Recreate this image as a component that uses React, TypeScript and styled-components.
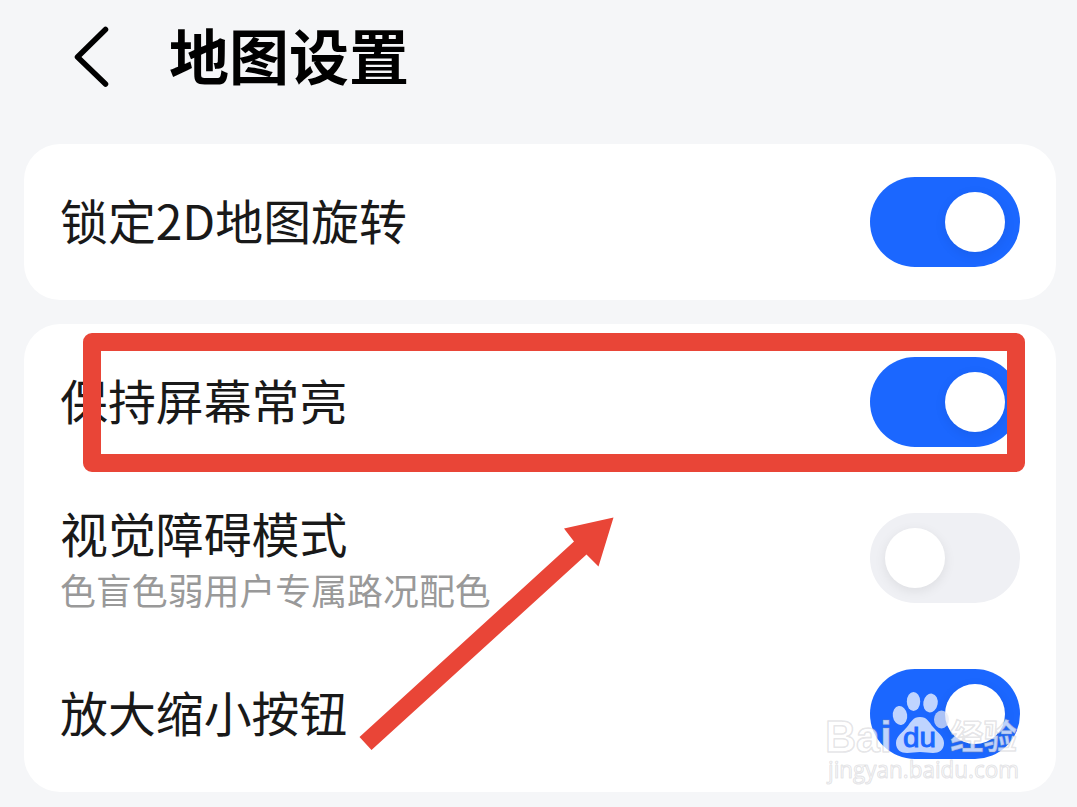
import React from "react";
import styled, { createGlobalStyle } from "styled-components";

const GlobalStyle = createGlobalStyle`
  * { box-sizing: border-box; }
  html, body { margin: 0; padding: 0; background: #f5f6f8; }
  body { font-family: "Noto Sans CJK SC", "Noto Sans", sans-serif; overflow: hidden; }
`;

const Screen = styled.div`
  position: relative;
  width: 1077px;
  height: 807px;
  background: #f5f6f8;
  overflow: hidden;
`;

const Header = styled.header`
  display: flex;
  align-items: center;
  height: 144px;
  padding: 0 0 30px 72px;
`;

const BackButton = styled.button`
  display: flex;
  width: 38px;
  height: 62px;
  padding: 0;
  border: 0;
  background: none;
`;

const Title = styled.h1`
  margin: 0 0 7px 59px;
  font-size: 60px;
  line-height: 60px;
  font-weight: 700;
  color: #000;
`;

const Groups = styled.main`
  display: flex;
  flex-direction: column;
  gap: 24px;
  padding: 0 21px 0 24px;
`;

const Card = styled.section`
  border-radius: 36px;
  background: #fff;
`;

const Row = styled.div`
  display: flex;
  align-items: center;
  justify-content: space-between;
  height: 156px;
  padding: 0 36px;
`;

const Texts = styled.div<{ $stacked: boolean }>`
  display: flex;
  flex-direction: column;
  gap: 15px;
  padding-bottom: ${(p) => (p.$stacked ? 2 : 6)}px;
`;

const Label = styled.span`
  font-size: 47.9px;
  line-height: 48px;
  color: #191919;
`;

const Hint = styled.span`
  font-size: 35.9px;
  line-height: 36px;
  color: #999;
`;

const Track = styled.button<{ $on: boolean }>`
  display: flex;
  align-items: center;
  justify-content: ${(p) => (p.$on ? "flex-end" : "flex-start")};
  width: 150px;
  height: 90px;
  padding: 0 15px;
  border: 0;
  border-radius: 45px;
  background: ${(p) => (p.$on ? "#1b67ff" : "#eff0f4")};
`;

const Knob = styled.span`
  width: 60px;
  height: 60px;
  border-radius: 50%;
  background: #fff;
  box-shadow: 0 3px 12px rgba(0, 0, 0, 0.08);
`;

const Highlight = styled.div`
  position: absolute;
  left: 83px;
  top: 333px;
  width: 942px;
  height: 139px;
  border: 18px solid #e94537;
  border-radius: 9px;
`;

const Arrow = styled.svg`
  position: absolute;
  left: 350px;
  top: 510px;
`;

const Watermark = styled.svg`
  position: absolute;
  left: 817px;
  top: 682px;
`;

type Setting = { label: string; hint?: string; on: boolean };

const groups: Setting[][] = [
  [{ label: "锁定2D地图旋转", on: true }],
  [
    { label: "保持屏幕常亮", on: true },
    { label: "视觉障碍模式", hint: "色盲色弱用户专属路况配色", on: false },
    { label: "放大缩小按钮", on: true },
  ],
];

const Switch = ({ on }: { on: boolean }) => (
  <Track $on={on} role="switch" aria-checked={on}>
    <Knob />
  </Track>
);

export default function App() {
  return (
    <Screen>
      <GlobalStyle />
      <Header>
        <BackButton aria-label="返回">
          <svg width="38" height="62" viewBox="0 0 38 62" fill="none">
            <path d="M33.500 3.500 5.500 31 33.500 58" stroke="#000" strokeWidth="5.500" strokeLinecap="round" strokeLinejoin="round" />
          </svg>
        </BackButton>
        <Title>地图设置</Title>
      </Header>
      <Groups>
        {groups.map((rows, i) => (
          <Card key={i}>
            {rows.map((s) => (
              <Row key={s.label}>
                <Texts $stacked={Boolean(s.hint)}>
                  <Label>{s.label}</Label>
                  {s.hint && <Hint>{s.hint}</Hint>}
                </Texts>
                <Switch on={s.on} />
              </Row>
            ))}
          </Card>
        ))}
      </Groups>
      <Highlight />
      <Arrow width="280" height="250" viewBox="350 510 280 250">
        <path d="M613.500 517.500 598.500 566.500 586.500 554.500 371.500 750 359.500 737 574 541.500 564 528.500Z" fill="#e94537" />
      </Arrow>
      <Watermark width="220" height="110" viewBox="817 682 220 110">
        <g fill="#fff" fillOpacity="0.72" stroke="#90909a" strokeOpacity="0.24" strokeWidth="1.600" strokeLinejoin="round">
          <text x="825" y="752" fontFamily="Liberation Sans" fontWeight="700" fontSize="45" textLength="67" lengthAdjust="spacingAndGlyphs">Bai</text>
          <text x="950" y="749" fontFamily="Noto Sans CJK SC" fontWeight="700" fontSize="34.500" textLength="67" lengthAdjust="spacingAndGlyphs">经验</text>
          <text x="828" y="778" fontFamily="Open Sans, sans-serif" fontSize="23" textLength="191" lengthAdjust="spacingAndGlyphs" strokeWidth="1.200">jingyan.baidu.com</text>
        </g>
        <g fill="#fff" fillOpacity="0.72">
          <ellipse cx="900" cy="715.500" rx="7.200" ry="9.500" transform="rotate(-8 900 715.500)" />
          <ellipse cx="913.500" cy="701.500" rx="6.700" ry="9.500" />
          <ellipse cx="930.500" cy="703" rx="7.200" ry="9.500" transform="rotate(10 930.500 703)" />
          <ellipse cx="941.500" cy="719.500" rx="7.500" ry="9" fill="#e4e8f4" />
          <path d="M920 717c7 0 9 5 13 10s11 9 11 16-5 10-11 10c-5 0-8-1-13-1s-8 1-13 1c-6 0-11-3-11-10s7-11 11-16 6-10 13-10Z" />
        </g>
        <text x="903" y="747" fill="#1b67ff" stroke="#1b67ff" strokeWidth="0.900" fontFamily="Liberation Sans" fontSize="27" textLength="33" lengthAdjust="spacingAndGlyphs">du</text>
      </Watermark>
    </Screen>
  );
}
